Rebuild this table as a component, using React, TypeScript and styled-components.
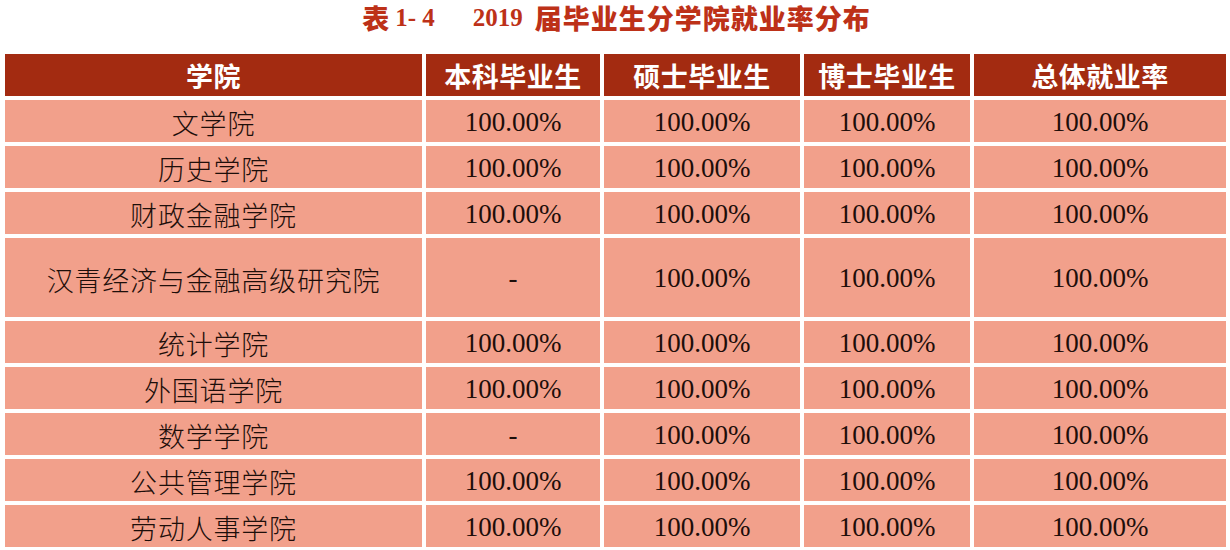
import React from 'react'
import styled, { createGlobalStyle } from 'styled-components'

const GlobalStyle = createGlobalStyle`
  html, body {
    margin: 0;
    padding: 0;
    background: #ffffff;
  }
`

const columns = '417px 174px 196px 166px 252px'

const headers = ['学院', '本科毕业生', '硕士毕业生', '博士毕业生', '总体就业率']

const rows: { name: string, values: string[], tall?: boolean }[] = [
  { name: '文学院', values: ['100.00%', '100.00%', '100.00%', '100.00%'] },
  { name: '历史学院', values: ['100.00%', '100.00%', '100.00%', '100.00%'] },
  { name: '财政金融学院', values: ['100.00%', '100.00%', '100.00%', '100.00%'] },
  { name: '汉青经济与金融高级研究院', values: ['-', '100.00%', '100.00%', '100.00%'], tall: true },
  { name: '统计学院', values: ['100.00%', '100.00%', '100.00%', '100.00%'] },
  { name: '外国语学院', values: ['100.00%', '100.00%', '100.00%', '100.00%'] },
  { name: '数学学院', values: ['-', '100.00%', '100.00%', '100.00%'] },
  { name: '公共管理学院', values: ['100.00%', '100.00%', '100.00%', '100.00%'] },
  { name: '劳动人事学院', values: ['100.00%', '100.00%', '100.00%', '100.00%'] }
]

const App: React.FC = () => {
  return (
    <>
      <GlobalStyle />
      <Page>
        <Title>
          <TitleHan>表</TitleHan>
          <TitleNum>1- 4</TitleNum>
          <TitleNum $wide>2019</TitleNum>
          <TitleHan>届毕业生分学院就业率分布</TitleHan>
        </Title>

        <Table>
          <Row>
            {headers.map((label) => (
              <HeadCell key={label}>{label}</HeadCell>
            ))}
          </Row>
          {rows.map((row) => (
            <Row key={row.name} $tall={row.tall}>
              <NameCell>{row.name}</NameCell>
              {row.values.map((value, index) => (
                <ValueCell key={index}>{value}</ValueCell>
              ))}
            </Row>
          ))}
        </Table>
      </Page>
    </>
  )
}

const Page = styled.div`
  width: 1230px;
  height: 550px;
  overflow: hidden;
  display: flex;
  flex-direction: column;
`

const Title = styled.h1`
  margin: 0;
  height: 54px;
  padding: 0 0 0 3px;
  box-sizing: border-box;
  display: flex;
  justify-content: center;
  align-items: flex-start;
  color: #bd3118;
  font-weight: 700;
  line-height: 40px;
`

const TitleHan = styled.span`
  font-family: "Noto Sans CJK SC", sans-serif;
  font-size: 27px;
  font-weight: 900;
  letter-spacing: 1px;
  line-height: 40px;
  margin-top: -2px;
`

const TitleNum = styled.span<{ $wide?: boolean }>`
  font-family: "Liberation Serif", serif;
  font-size: 25px;
  font-weight: 700;
  line-height: 40px;
  margin-top: -2px;
  margin-left: 5px;
  margin-right: ${({ $wide }) => ($wide ? '12px' : '33px')};
`

const Table = styled.div`
  display: flex;
  flex-direction: column;
  gap: 4px;
  padding-left: 5px;
`

const Row = styled.div<{ $tall?: boolean }>`
  display: grid;
  grid-template-columns: ${columns};
  column-gap: 4px;
  height: ${({ $tall }) => ($tall ? '79px' : '42px')};
`

const HeadCell = styled.div`
  background: #a32b11;
  color: #ffffff;
  display: flex;
  align-items: center;
  justify-content: center;
  font-family: "Noto Sans CJK SC", sans-serif;
  font-size: 27px;
  font-weight: 700;
  letter-spacing: 0.5px;
  padding-top: 1px;
`

const Cell = styled.div`
  background: #f2a08b;
  color: #1d0e0a;
  display: flex;
  align-items: center;
  justify-content: center;
  font-size: 27px;
`

const NameCell = styled(Cell)`
  font-family: "Noto Sans CJK SC", sans-serif;
  font-weight: 300;
  letter-spacing: 0.8px;
  padding-top: 3px;
`

const ValueCell = styled(Cell)`
  font-family: "Liberation Serif", serif;
  font-weight: 400;
  padding-top: 2px;
`

export default App
